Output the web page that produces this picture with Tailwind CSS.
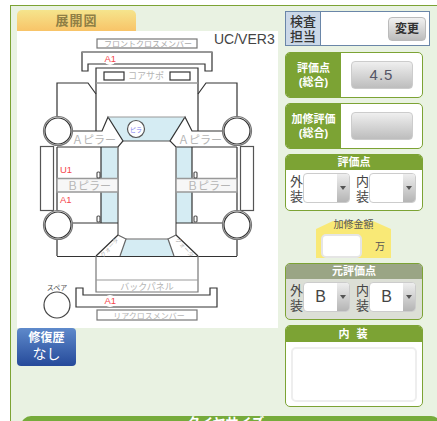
<!DOCTYPE html>
<html lang="ja">
<head>
    <meta charset="UTF-8">
    <title>展開図</title>
    <script src="https://cdn.jsdelivr.net/npm/@tailwindcss/browser@4"></script>
</head>
<body class="bg-white h-[421px] overflow-hidden font-['Liberation_Sans','Noto_Sans_CJK_JP',sans-serif] text-[#444]">
    <div class="ml-[10px] mt-[5px] w-[440px] h-[500px] border border-[#7ca334] bg-[#e9f2e2] pt-1 pl-[6px]">
        <div class="flex gap-[7px]">
            <!-- left: diagram -->
            <div class="w-[261px] shrink-0">
                <div class="w-[119px] h-[21px] rounded-t-[5px] bg-gradient-to-b from-[#f5e48c] to-[#f8c468] text-[#8f7f45] text-[13px] font-bold tracking-[1px] flex items-center justify-center">展開図</div>
                <svg class="block bg-white" width="261" height="297" viewBox="17 31 261 297" fill="none" stroke="#333" stroke-width="1.2">
                    <g fill="#d5ecf3" stroke="none">
                        <polygon points="108,117 185,117 170,141 123,141"/>
                        <rect x="101" y="147" width="17" height="31"/>
                        <rect x="101" y="192" width="17" height="31"/>
                        <rect x="176" y="147" width="16" height="31"/>
                        <rect x="176" y="192" width="16" height="31"/>
                        <polygon points="126,239 168,239 174,256 120,256"/>
                    </g>
                    <!-- front -->
                    <rect x="97" y="39" width="100" height="9" stroke="#777"/>
                    <path d="M82 52H212V71H205V64H88V71H82Z"/>
                    <path d="M82 52H212" stroke="#999" stroke-width="1.5"/>
                    <path d="M96 131V68H198V131"/>
                    <path d="M96 83H198" stroke="#999" stroke-width="1.5"/>
                    <rect x="104" y="72" width="20" height="8"/>
                    <rect x="170" y="72" width="20" height="8"/>
                    <path d="M57 117V83H88L96 94"/>
                    <path d="M237 117V83H206L198 94"/>
                    <!-- pillars and windshield -->
                    <path d="M72 131H102L108 117L123 141L118 147H57"/>
                    <path d="M222 131H192L185 117L170 141L176 147H237"/>
                    <path d="M108 117H185" stroke="#999"/>
                    <path d="M123 141H170" stroke="#555"/>
                    <!-- doors -->
                    <path d="M57 147V256M237 147V256"/>
                    <path d="M101 147V178M101 192V223M192 147V178M192 192V223"/>
                    <path d="M118 147V235M176 147V235" stroke="#777" stroke-width="1.5"/>
                    <rect x="57" y="178.500" width="61" height="13.500" stroke="#999" stroke-width="1.500" fill="#f7f7f7"/>
                    <rect x="176" y="178.500" width="61" height="13.500" stroke="#999" stroke-width="1.500" fill="#f7f7f7"/>
                    <path d="M57 223H118M176 223H237"/>
                    <rect x="40.500" y="146.500" width="13" height="64" stroke="#555" fill="#fff"/>
                    <rect x="240.500" y="146.500" width="13" height="64" stroke="#555" fill="#fff"/>
                    <rect x="97" y="172" width="3" height="6" rx="1" stroke="#555"/>
                    <rect x="97" y="216" width="3" height="6" rx="1" stroke="#555"/>
                    <rect x="194" y="172" width="3" height="6" rx="1" stroke="#555"/>
                    <rect x="194" y="216" width="3" height="6" rx="1" stroke="#555"/>
                    <!-- wheels -->
                    <g fill="#fff">
                        <circle cx="58" cy="131" r="14.500" stroke="#777"/>
                        <circle cx="58" cy="131" r="13"/>
                        <circle cx="237" cy="131" r="14.500" stroke="#777"/>
                        <circle cx="237" cy="131" r="13"/>
                        <circle cx="58" cy="225" r="14.500" stroke="#777"/>
                        <circle cx="58" cy="225" r="13"/>
                        <circle cx="237" cy="225" r="14.500" stroke="#777"/>
                        <circle cx="237" cy="225" r="13"/>
                        <circle cx="57" cy="305" r="13" stroke="#444"/>
                    </g>
                    <!-- rear -->
                    <path d="M57 256.500H237"/>
                    <path d="M126 239H168" stroke="#999" stroke-width="1.5"/>
                    <path d="M118 235L96 256M176 235L198 256"/>
                    <path d="M118 235L126 239L120 256M176 235L168 239L174 256" stroke="#666"/>
                    <path d="M96 256V292H198V256" stroke="#777"/>
                    <path d="M96 280H198" stroke="#999"/>
                    <path d="M76 288H83V295H210V288H217V307H76Z"/>
                    <rect x="97" y="310" width="100" height="10" stroke="#777"/>
                    <circle cx="110" cy="59" r="6" fill="#fff" stroke="none"/>
                    <circle cx="110" cy="301" r="6" fill="#fff" stroke="none"/>
                    <circle cx="136" cy="129" r="8.500" fill="#fff" stroke="#555"/>
                    <!-- labels -->
                    <g stroke="none" fill="#b5b5b5" text-anchor="middle">
                        <text x="148" y="47" font-size="8" fill="#aaa">フロントクロスメンバー</text>
                        <text x="146" y="79" font-size="9">コアサポ</text>
                        <text x="94" y="144" font-size="11">Ａピラー</text>
                        <text x="200" y="144" font-size="11">Ａピラー</text>
                        <text x="89" y="190" font-size="11">Ｂピラー</text>
                        <text x="209" y="190" font-size="11">Ｂピラー</text>
                        <text x="147" y="290" font-size="9">バックパネル</text>
                        <text x="149" y="319" font-size="8">リアクロスメンバー</text>
                        <text x="111" y="249" font-size="6" transform="rotate(-48 111 249)">クォータ</text>
                        <text x="183" y="249" font-size="6" transform="rotate(48 183 249)">クォータ</text>
                        <text x="136" y="132" font-size="6" fill="#7a7af0">ピラ</text>
                        <text x="57" y="290" font-size="7" fill="#555">スペア</text>
                    </g>
                    <g stroke="none" fill="#f5474e" font-size="9.500">
                        <text x="104.500" y="62">A1</text>
                        <text x="104.500" y="304">A1</text>
                        <text x="60" y="173">U1</text>
                        <text x="60" y="203">A1</text>
                    </g>
                    <text x="214" y="44" font-size="14" fill="#444" stroke="none">UC/VER3</text>
                </svg>
                <div class="w-[59px] h-[38px] rounded-[4px] bg-gradient-to-b from-[#5f8acb] to-[#264a9a] text-white text-center flex flex-col justify-center">
                    <div class="text-[12px] font-bold leading-[15px]">修復歴</div>
                    <div class="text-[14px] leading-[17px]">なし</div>
                </div>
            </div>

            <!-- right: grades -->
            <div class="w-[145px] pt-px flex flex-col">
                <div class="h-[35px] border border-[#6a86a8] bg-white flex">
                    <div class="w-[35px] bg-[#cbd8e8] border-r border-[#6a86a8] text-[13px] leading-[15px] text-[#333] font-medium text-center flex items-center justify-center">検査<br>担当</div>
                    <div class="flex-1 flex items-center justify-end pr-[3px]">
                        <div class="w-[38px] h-[24px] rounded-[4px] border border-[#bbb] bg-gradient-to-b from-[#f2f2f2] to-[#bcbcbc] text-[12px] font-bold text-[#333] flex items-center justify-center">変更</div>
                    </div>
                </div>

                <div class="w-[138px] h-[46px] mt-[6px] flex rounded-[5px] border border-[#7ca334] bg-white overflow-hidden">
                    <div class="w-[55px] bg-[#7ca334] text-white text-[11px] leading-[14px] font-bold text-center flex items-center justify-center">評価点<br>(総合)</div>
                    <div class="flex-1 flex items-center justify-center">
                        <div class="w-[62px] h-[28px] rounded-[4px] border border-[#ccc] bg-gradient-to-b from-[#efefef] to-[#bdbdbd] text-[15px] tracking-[1px] text-[#556] flex items-center justify-center">4.5</div>
                    </div>
                </div>

                <div class="w-[138px] h-[46px] mt-[5px] flex rounded-[5px] border border-[#7ca334] bg-white overflow-hidden">
                    <div class="w-[55px] bg-[#7ca334] text-white text-[11px] leading-[14px] font-bold text-center flex items-center justify-center">加修評価<br>(総合)</div>
                    <div class="flex-1 flex items-center justify-center">
                        <div class="w-[62px] h-[28px] rounded-[4px] border border-[#ccc] bg-gradient-to-b from-[#efefef] to-[#bdbdbd]"></div>
                    </div>
                </div>

                <div class="w-[138px] h-[57px] mt-[5px] rounded-[5px] border border-[#7ca334] bg-white overflow-hidden">
                    <div class="h-[15px] bg-[#7ca334] text-white text-[11px] font-bold leading-[15px] text-center">評価点</div>
                    <div class="flex gap-[6px] pl-[4px] pt-[3px] text-[13px] leading-[15px] text-[#444]">
                        <div class="flex">
                            <div class="w-[13px] pt-px">外<br>装</div>
                            <div class="w-[47px] h-[30px] flex rounded-[4px] border border-[#ccc] bg-white overflow-hidden">
                                <div class="flex-1"></div>
                                <div class="w-[12px] bg-gradient-to-b from-[#eee] to-[#b5b5b5] flex items-center justify-center"><div class="border-x-[3px] border-t-[4px] border-x-transparent border-t-[#555]"></div></div>
                            </div>
                        </div>
                        <div class="flex">
                            <div class="w-[13px] pt-px">内<br>装</div>
                            <div class="w-[47px] h-[30px] flex rounded-[4px] border border-[#ccc] bg-white overflow-hidden">
                                <div class="flex-1"></div>
                                <div class="w-[12px] bg-gradient-to-b from-[#eee] to-[#b5b5b5] flex items-center justify-center"><div class="border-x-[3px] border-t-[4px] border-x-transparent border-t-[#555]"></div></div>
                            </div>
                        </div>
                    </div>
                </div>

                <div class="relative w-[75px] h-[38px] mt-[9px] ml-[31px]">
                    <svg class="absolute inset-0" width="75" height="38" viewBox="0 0 75 38"><polygon points="0,9 17,1 57,1 75,9 75,38 0,38" fill="#f9e976"/></svg>
                    <div class="relative text-[10px] leading-[10px] text-center text-[#555]">加修金額</div>
                    <div class="relative flex items-center mt-[4px] ml-[5px]">
                        <div class="w-[41px] h-[24px] rounded-[5px] border-2 border-[#e5e5e5] bg-white"></div>
                        <div class="ml-[13px] text-[10px] text-[#555]">万</div>
                    </div>
                </div>

                <div class="w-[138px] h-[57px] mt-[5px] rounded-[5px] border border-[#7ca334] bg-[#dcdfd6] overflow-hidden">
                    <div class="h-[15px] bg-[#9aa585] text-white text-[11px] font-bold leading-[15px] text-center">元評価点</div>
                    <div class="flex gap-[6px] pl-[4px] pt-[3px] text-[13px] leading-[15px] text-[#444]">
                        <div class="flex">
                            <div class="w-[13px] pt-px">外<br>装</div>
                            <div class="w-[47px] h-[30px] flex rounded-[4px] border border-[#ccc] bg-white overflow-hidden">
                                <div class="flex-1 text-center text-[16px] leading-[27px] text-[#444]">B</div>
                                <div class="w-[12px] bg-gradient-to-b from-[#eee] to-[#b5b5b5] flex items-center justify-center"><div class="border-x-[3px] border-t-[4px] border-x-transparent border-t-[#555]"></div></div>
                            </div>
                        </div>
                        <div class="flex">
                            <div class="w-[13px] pt-px">内<br>装</div>
                            <div class="w-[47px] h-[30px] flex rounded-[4px] border border-[#ccc] bg-white overflow-hidden">
                                <div class="flex-1 text-center text-[16px] leading-[27px] text-[#444]">B</div>
                                <div class="w-[12px] bg-gradient-to-b from-[#eee] to-[#b5b5b5] flex items-center justify-center"><div class="border-x-[3px] border-t-[4px] border-x-transparent border-t-[#555]"></div></div>
                            </div>
                        </div>
                    </div>
                </div>

                <div class="w-[138px] h-[82px] mt-[5px] rounded-[5px] border border-[#7ca334] bg-white overflow-hidden">
                    <div class="h-[16px] bg-[#7ca334] text-white text-[11px] font-bold leading-[16px] tracking-[2px] text-center">内 装</div>
                    <div class="mx-[5px] mt-[5px] h-[55px] rounded-[5px] border-2 border-[#eeeeee] bg-white"></div>
                </div>
            </div>
        </div>

        <div class="w-[420px] h-[30px] mt-[9px] ml-[4px] rounded-t-[10px] bg-[#76ab3b] text-white text-[13px] font-bold pl-[166px] leading-[14px]">タイヤサイズ</div>
    </div>
</body>
</html>
